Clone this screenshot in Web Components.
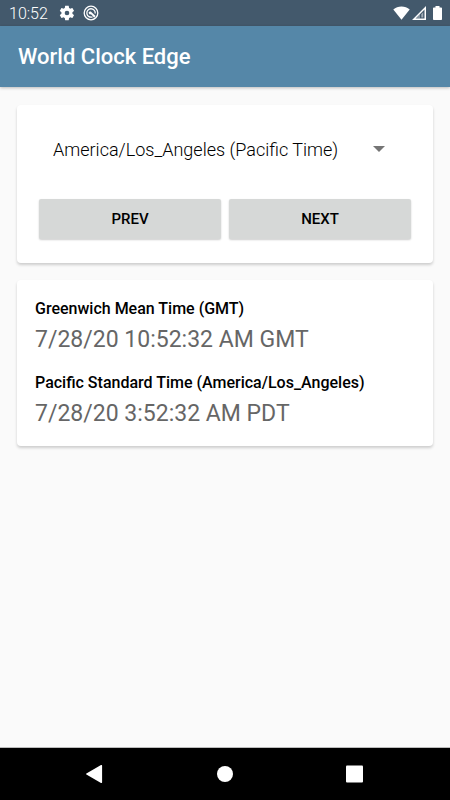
<!DOCTYPE html>
<html lang="en">
<head>
<meta charset="utf-8">
<meta name="viewport" content="width=device-width, initial-scale=1">
<title>World Clock Edge</title>
<style>
  html, body {
    height: 100%;
    margin: 0;
  }
  body {
    font-family: Roboto, "Liberation Sans", sans-serif;
    color: #000;
    background: #fafafa;
  }
</style>
</head>
<body>
<world-clock></world-clock>

<script>
const zones = [
  { id: 'America/Denver', option: 'America/Denver (Mountain Time)', name: 'Mountain Standard Time' },
  { id: 'America/Los_Angeles', option: 'America/Los_Angeles (Pacific Time)', name: 'Pacific Standard Time' },
  { id: 'America/Anchorage', option: 'America/Anchorage (Alaska Time)', name: 'Alaska Standard Time' },
];

function formatTime(date, timeZone) {
  const text = date.toLocaleString('en-US', {
    timeZone,
    year: '2-digit',
    month: 'numeric',
    day: 'numeric',
    hour: 'numeric',
    minute: '2-digit',
    second: '2-digit',
    timeZoneName: 'short',
  });
  return text.replace(',', '').replace(/\s/g, ' ').replace('UTC', 'GMT');
}

class StatusBar extends HTMLElement {
  constructor() {
    super();
    this._root = this.attachShadow({ mode: 'open' });
    this._root.innerHTML = `
    <style>
      :host {
        display: flex;
        align-items: center;
        height: 26px;
        padding: 0 8px 0 9px;
        color: #fff;
        background: #43596c;
        font-size: 16px;
        font-weight: 300;
      }
      svg {
        display: block;
        fill: currentColor;
      }
      .notices {
        display: flex;
        gap: 8px;
        margin-left: 11px;
      }
      .system {
        display: flex;
        align-items: center;
        gap: 2px;
        margin-left: auto;
      }
      .battery {
        margin-left: 5px;
      }
    </style>
    <span>${this.getAttribute('time')}</span>
    <div class="notices">
      <svg width="16" height="16" viewBox="1 1 22 22" aria-hidden="true">
        <path d="M19.4 13c0-.3.1-.6.1-1s0-.7-.1-1l2.100-1.600c.2-.2.2-.4.1-.6l-2-3.500c-.1-.2-.4-.3-.6-.2l-2.500 1c-.5-.4-1.100-.7-1.700-1l-.4-2.600c0-.3-.2-.5-.5-.5h-4c-.2 0-.5.2-.5.4l-.4 2.700c-.6.2-1.100.6-1.700 1l-2.500-1c-.2-.1-.5 0-.6.2l-2 3.500c-.1.2-.1.5.1.6l2.100 1.600c0 .3-.1.7-.1 1s0 .7.1 1l-2.100 1.600c-.2.2-.2.4-.1.600l2 3.500c.1.2.4.3.6.2l2.500-1c.5.4 1.100.7 1.700 1l.4 2.600c0 .3.3.5.5.5h4c.3 0 .5-.2.5-.4l.4-2.700c.6-.2 1.100-.6 1.700-1l2.500 1c.2.1.5 0 .6-.2l2-3.500c.1-.2.1-.5-.1-.6zM12 15.200a3.200 3.200 0 1 1 0-6.400 3.200 3.200 0 0 1 0 6.400z"/>
      </svg>
      <svg width="16" height="16" viewBox="0 0 16 16" aria-hidden="true">
        <circle cx="8" cy="8" r="6.800" fill="none" stroke="currentColor" stroke-width="1.300"/>
        <path d="M9.500 11.900A4.200 4.200 0 1 1 12.200 8.500" fill="none" stroke="currentColor" stroke-width="1.300"/>
        <path d="M5.600 7.900C5.800 6.600 7.300 6 8.300 6.900L12.600 11 11.100 12.700 8.600 9.800C8 9.200 7.300 9.100 6.700 9.400z"/>
      </svg>
    </div>
    <div class="system">
      <svg width="17" height="14" viewBox="0 0 17 14" aria-hidden="true">
        <path d="M8.500 13.700L.3 3.600C2.500 1.600 5.400.5 8.500.5s6 1.100 8.200 3.100z"/>
      </svg>
      <svg width="14" height="14" viewBox="0 0 14 14" aria-hidden="true">
        <path fill-rule="evenodd" d="M0 14L14 0v14zM3.600 12.500h8.900V3.600z"/>
        <path d="M8 8v4.500H3.600z" fill-opacity=".35"/>
        <path d="M9.300 8.200L11.200 6.300v5.200H9.300z" fill-opacity=".5"/>
      </svg>
      <svg class="battery" width="9" height="14" viewBox="0 0 9 14" aria-hidden="true">
        <path d="M2.500 0h4v1.400H8.200c.5 0 .8.3.8.8v11c0 .5-.3.8-.8.8H.8c-.5 0-.8-.3-.8-.8v-11c0-.5.3-.8.8-.8h1.700z"/>
      </svg>
    </div>
    `;
  }
}
customElements.define('status-bar', StatusBar);

class AppBar extends HTMLElement {
  constructor() {
    super();
    this._root = this.attachShadow({ mode: 'open' });
    this._root.innerHTML = `
    <style>
      :host {
        display: flex;
        align-items: center;
        height: 61px;
        padding: 0 18px;
        color: #fff;
        background: #5587a8;
        box-shadow: 0 1px 3px rgba(0, 0, 0, 0.25);
      }
      h1 {
        margin: 0;
        font-size: 22px;
        line-height: 28px;
        font-weight: 500;
      }
    </style>
    <h1><slot></slot></h1>
    `;
  }
}
customElements.define('app-bar', AppBar);

class ClockCard extends HTMLElement {
  constructor() {
    super();
    this._root = this.attachShadow({ mode: 'open' });
    this._root.innerHTML = `
    <style>
      :host {
        display: block;
        background: #fff;
        border-radius: 4px;
        box-shadow: 0 2px 3px rgba(0, 0, 0, 0.18);
      }
    </style>
    <slot></slot>
    `;
  }
}
customElements.define('clock-card', ClockCard);

class ZonePicker extends HTMLElement {
  constructor() {
    super();
    this._root = this.attachShadow({ mode: 'open' });
    this._root.innerHTML = `
    <style>
      :host {
        display: block;
        padding: 18px 22px 24px;
      }
      .spinner {
        display: grid;
        align-items: center;
        margin-bottom: 24px;
      }
      select, .spinner svg {
        grid-area: 1 / 1;
      }
      select {
        appearance: none;
        width: 100%;
        height: 52px;
        margin: 0;
        padding: 0 44px 0 14px;
        border: 0;
        color: #000;
        background: transparent;
        font: inherit;
        font-size: 18px;
        font-weight: 300;
      }
      .spinner svg {
        justify-self: end;
        margin-right: 26px;
        fill: #757575;
        pointer-events: none;
      }
      .buttons {
        display: grid;
        grid-template-columns: 1fr 1fr;
        gap: 8px;
      }
      button {
        height: 40px;
        padding: 0;
        border: 0;
        border-radius: 2px;
        color: #000;
        background: #d6d8d7;
        box-shadow: 0 1px 2px rgba(0, 0, 0, 0.2);
        font: inherit;
        font-size: 15px;
        font-weight: 500;
      }
    </style>
    <div class="spinner">
      <select aria-label="Time zone"></select>
      <svg width="12" height="6" viewBox="0 0 12 6" aria-hidden="true"><path d="M0 0h12L6 6z"/></svg>
    </div>
    <div class="buttons">
      <button type="button" class="prev">PREV</button>
      <button type="button" class="next">NEXT</button>
    </div>
    `;
    this._select = this._root.querySelector('select');
    zones.forEach((zone, i) => {
      this._select.add(new Option(zone.option, i));
    });
    this._select.selectedIndex = 1;
    this._select.addEventListener('change', () => this.notify());
    this._root.querySelector('.prev').addEventListener('click', () => this.step(-1));
    this._root.querySelector('.next').addEventListener('click', () => this.step(1));
  }

  get zone() {
    return zones[this._select.selectedIndex];
  }

  step(n) {
    const count = zones.length;
    this._select.selectedIndex = (this._select.selectedIndex + n + count) % count;
    this.notify();
  }

  notify() {
    this.dispatchEvent(new CustomEvent('zonechange'));
  }
}
customElements.define('zone-picker', ZonePicker);

class ZoneTime extends HTMLElement {
  constructor() {
    super();
    this._root = this.attachShadow({ mode: 'open' });
    this._root.innerHTML = `
    <style>
      :host {
        display: block;
      }
      h2 {
        margin: 0;
        font-size: 16px;
        line-height: 24px;
        font-weight: 500;
      }
      time {
        display: block;
        color: #666;
        font-size: 23px;
        line-height: 38px;
      }
    </style>
    <h2></h2>
    <time></time>
    `;
  }

  show(label, text) {
    this._root.querySelector('h2').textContent = label;
    this._root.querySelector('time').textContent = text;
  }
}
customElements.define('zone-time', ZoneTime);

class NavBar extends HTMLElement {
  constructor() {
    super();
    this._root = this.attachShadow({ mode: 'open' });
    this._root.innerHTML = `
    <style>
      :host {
        display: flex;
        justify-content: center;
        align-items: center;
        gap: 82px;
        height: 52px;
        background: #000;
        box-shadow: 0 -1px 0 #bbb;
      }
      button {
        display: grid;
        place-items: center;
        width: 48px;
        height: 48px;
        padding: 0;
        border: 0;
        background: none;
      }
      svg {
        display: block;
        fill: #fff;
      }
    </style>
    <button type="button" aria-label="Back">
      <svg width="18" height="18" viewBox="0 0 18 18">
        <path d="M.4 8.400L15 .1c.6-.3 1.100 0 1.100.6v16.600c0 .6-.5.900-1.100.6L.4 9.600c-.5-.3-.5-.9 0-1.200z"/>
      </svg>
    </button>
    <button type="button" aria-label="Home">
      <svg width="18" height="18" viewBox="0 0 18 18"><circle cx="9" cy="9" r="8"/></svg>
    </button>
    <button type="button" aria-label="Overview">
      <svg width="18" height="18" viewBox="0 0 18 18"><rect y="0.500" width="17" height="17" rx="1"/></svg>
    </button>
    `;
  }
}
customElements.define('nav-bar', NavBar);

class WorldClock extends HTMLElement {
  constructor() {
    super();
    this._root = this.attachShadow({ mode: 'open' });
    this._root.innerHTML = `
    <style>
      :host {
        display: flex;
        flex-direction: column;
        min-height: 100%;
      }
      main {
        flex: 1;
        display: flex;
        flex-direction: column;
        gap: 17px;
        padding: 18px 17px;
      }
      .times {
        display: grid;
        gap: 12px;
        padding: 17px 18px 13px;
      }
    </style>
    <status-bar time="10:52"></status-bar>
    <app-bar>World Clock Edge</app-bar>
    <main>
      <clock-card><zone-picker></zone-picker></clock-card>
      <clock-card>
        <div class="times">
          <zone-time class="gmt"></zone-time>
          <zone-time class="local"></zone-time>
        </div>
      </clock-card>
    </main>
    <nav-bar></nav-bar>
    `;
    this._date = new Date('2020-07-28T10:52:32Z');
    this._picker = this._root.querySelector('zone-picker');
    this._picker.addEventListener('zonechange', () => this.update());
    this.update();
  }

  update() {
    const zone = this._picker.zone;
    this._root.querySelector('.gmt').show('Greenwich Mean Time (GMT)', formatTime(this._date, 'UTC'));
    this._root.querySelector('.local').show(`${zone.name} (${zone.id})`, formatTime(this._date, zone.id));
  }
}
customElements.define('world-clock', WorldClock);
</script>
</body>
</html>
